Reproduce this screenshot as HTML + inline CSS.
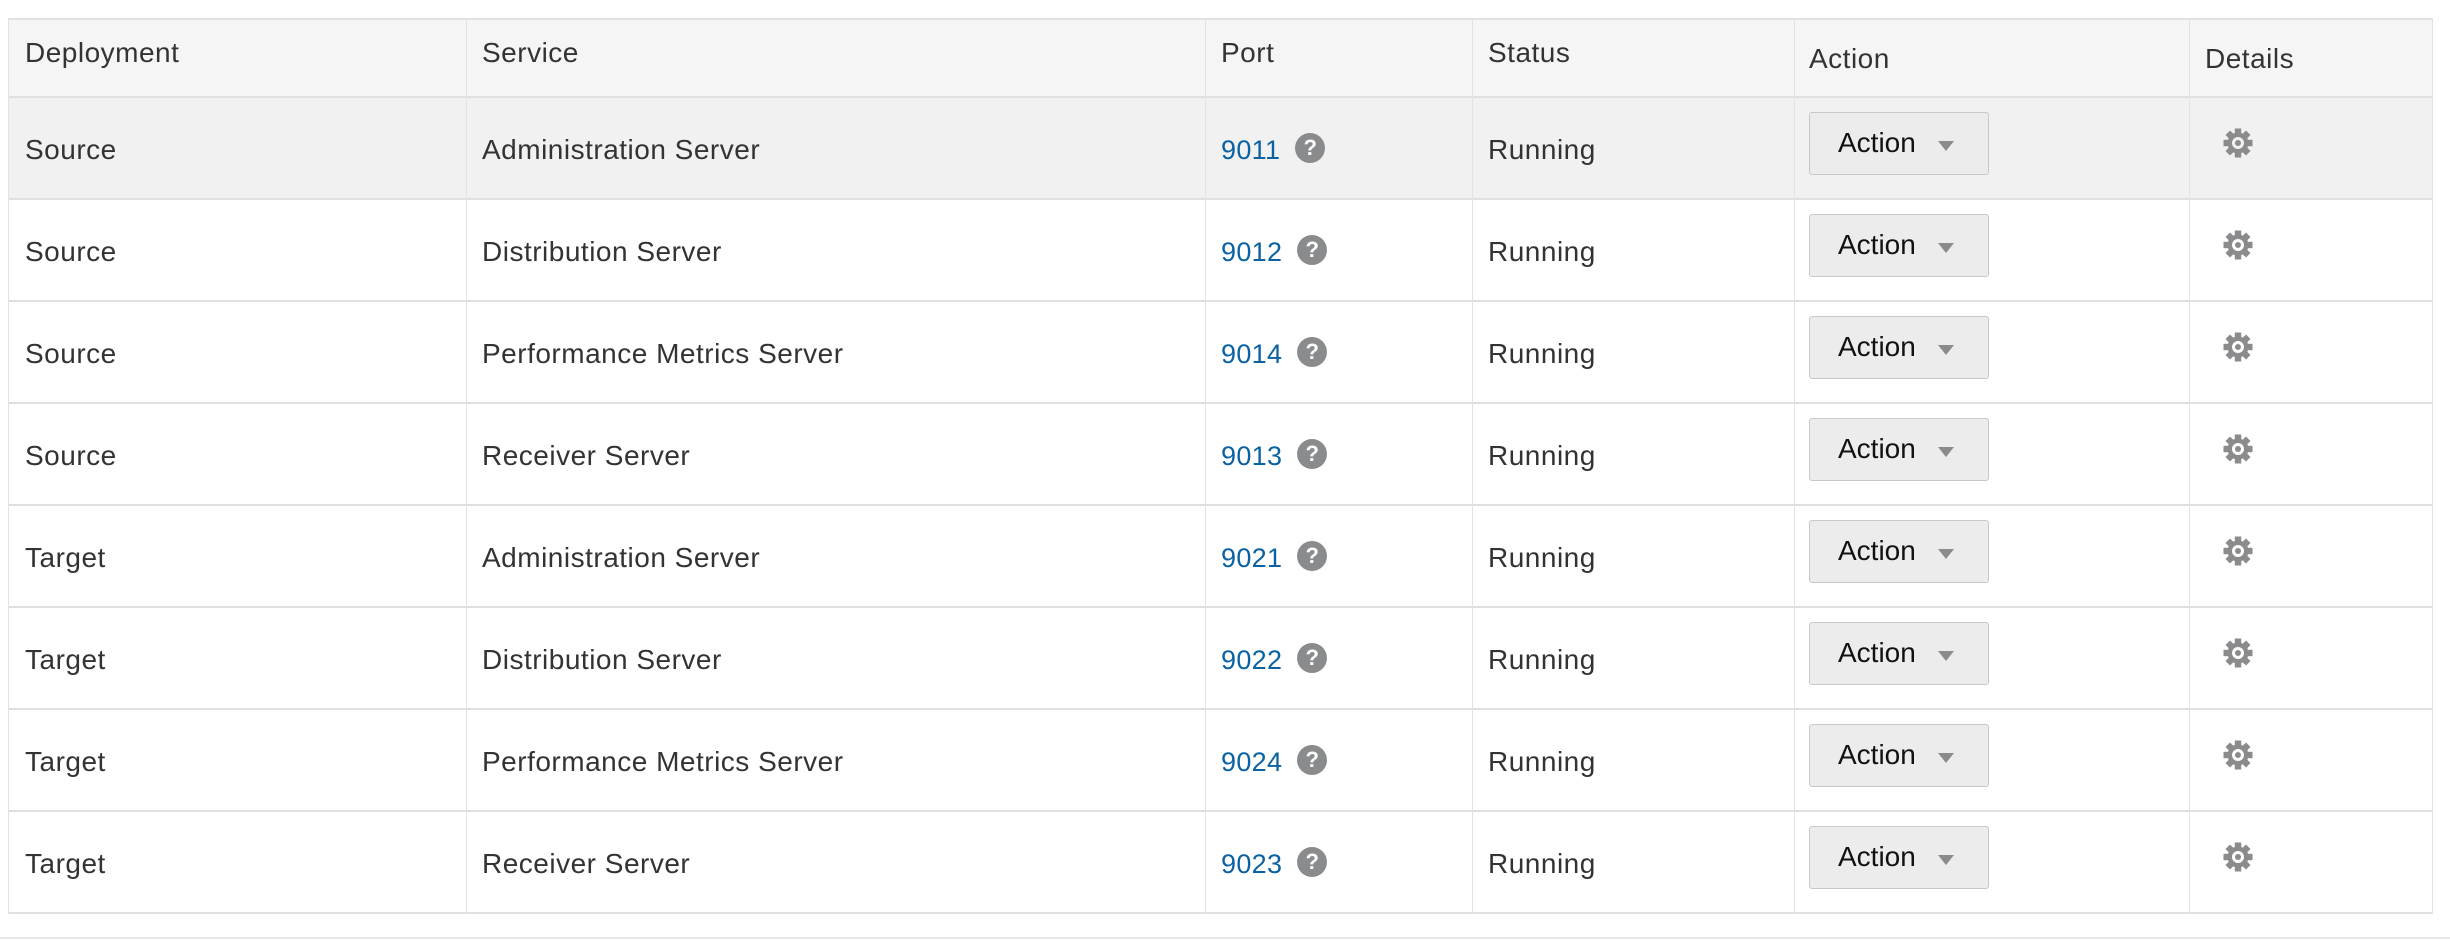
<!DOCTYPE html>
<html><head><style>
body{margin:0;width:2450px;height:940px;background:#fff;font-family:"Liberation Sans",sans-serif;color:#333;position:relative;overflow:hidden}
.a{position:absolute}
.h{position:absolute;left:8px;width:2425px;height:2px;background:#e0e0e0}
.v{position:absolute;width:1px;background:#e2e2e2;top:19px;height:920px}
.t{position:absolute;font-size:28px;letter-spacing:0.5px;line-height:30px;white-space:nowrap}
.l{color:#0a62a3;font-size:27px;letter-spacing:0.3px;display:flex;align-items:center}
.q{display:inline-block;margin-left:15px;width:30px;height:30px;border-radius:50%;background:#8a8b8d;color:#fff;font-weight:bold;font-size:22px;line-height:30px;text-align:center;letter-spacing:0}
.b{position:absolute;left:1809px;width:178px;height:61px;background:#ececec;border:1px solid #c8c8c8;border-radius:3px}
.b span{position:absolute;left:28px;top:15px;font-size:28px;line-height:30px;color:#111}
.b i{position:absolute;left:128px;top:28px;border-left:8px solid transparent;border-right:8px solid transparent;border-top:10px solid #8a8b8d}
</style></head><body>
<div class="a" style="left:8px;top:19px;width:2425px;height:79px;background:#f5f5f5"></div>
<div class="a" style="left:8px;top:98px;width:2425px;height:101px;background:#f1f1f1"></div>
<div class="h" style="top:18px"></div>
<div class="h" style="top:96px"></div>
<div class="h" style="top:198px"></div>
<div class="h" style="top:300px"></div>
<div class="h" style="top:402px"></div>
<div class="h" style="top:504px"></div>
<div class="h" style="top:606px"></div>
<div class="h" style="top:708px"></div>
<div class="h" style="top:810px"></div>
<div class="h" style="top:912px"></div>
<div class="a" style="left:0;top:937px;width:2450px;height:2px;background:#e8e8e8"></div>
<div class="v" style="left:8px;height:895px"></div>
<div class="v" style="left:466px;height:895px"></div>
<div class="v" style="left:1205px;height:895px"></div>
<div class="v" style="left:1472px;height:895px"></div>
<div class="v" style="left:1794px;height:895px"></div>
<div class="v" style="left:2189px;height:895px"></div>
<div class="v" style="left:2432px;height:895px"></div>
<div class="t" style="left:25px;top:38px">Deployment</div>
<div class="t" style="left:482px;top:38px">Service</div>
<div class="t" style="left:1221px;top:38px">Port</div>
<div class="t" style="left:1488px;top:38px">Status</div>
<div class="t" style="left:1809px;top:44px">Action</div>
<div class="t" style="left:2205px;top:44px">Details</div>
<div id="rows"></div>
<script>
var d=[["Source","Administration Server","9011"],["Source","Distribution Server","9012"],["Source","Performance Metrics Server","9014"],["Source","Receiver Server","9013"],["Target","Administration Server","9021"],["Target","Distribution Server","9022"],["Target","Performance Metrics Server","9024"],["Target","Receiver Server","9023"]];
var h="";
d.forEach(function(r,i){var y=98+i*102;var ty=y+37;
h+='<div class="t" style="left:25px;top:'+ty+'px">'+r[0]+'</div>';
h+='<div class="t" style="left:482px;top:'+ty+'px">'+r[1]+'</div>';
h+='<div class="t l" style="left:1221px;top:'+(y+33)+'px;height:34px"><span style="position:relative;top:2px">'+r[2]+'</span><span class="q">?</span></div>';
h+='<div class="t" style="left:1488px;top:'+ty+'px">Running</div>';
h+='<div class="b" style="top:'+(y+14)+'px"><span>Action</span><i></i></div>';
h+='<svg class="a" style="left:2222px;top:'+(y+29)+'px" width="32" height="32" viewBox="0 0 32 32"><g fill="#8a8b8d"><circle cx="16" cy="16" r="10.5"/>';
for(var k=0;k<8;k++){h+='<rect x="12.8" y="1.5" width="6.4" height="8" transform="rotate('+(k*45)+' 16 16)"/>';}
h+='</g><circle cx="16" cy="16" r="4.5" fill="none" stroke="'+(i==0?'#f1f1f1':'#fff')+'" stroke-width="3"/></svg>';
});
document.getElementById("rows").innerHTML=h;
</script>
</body></html>
